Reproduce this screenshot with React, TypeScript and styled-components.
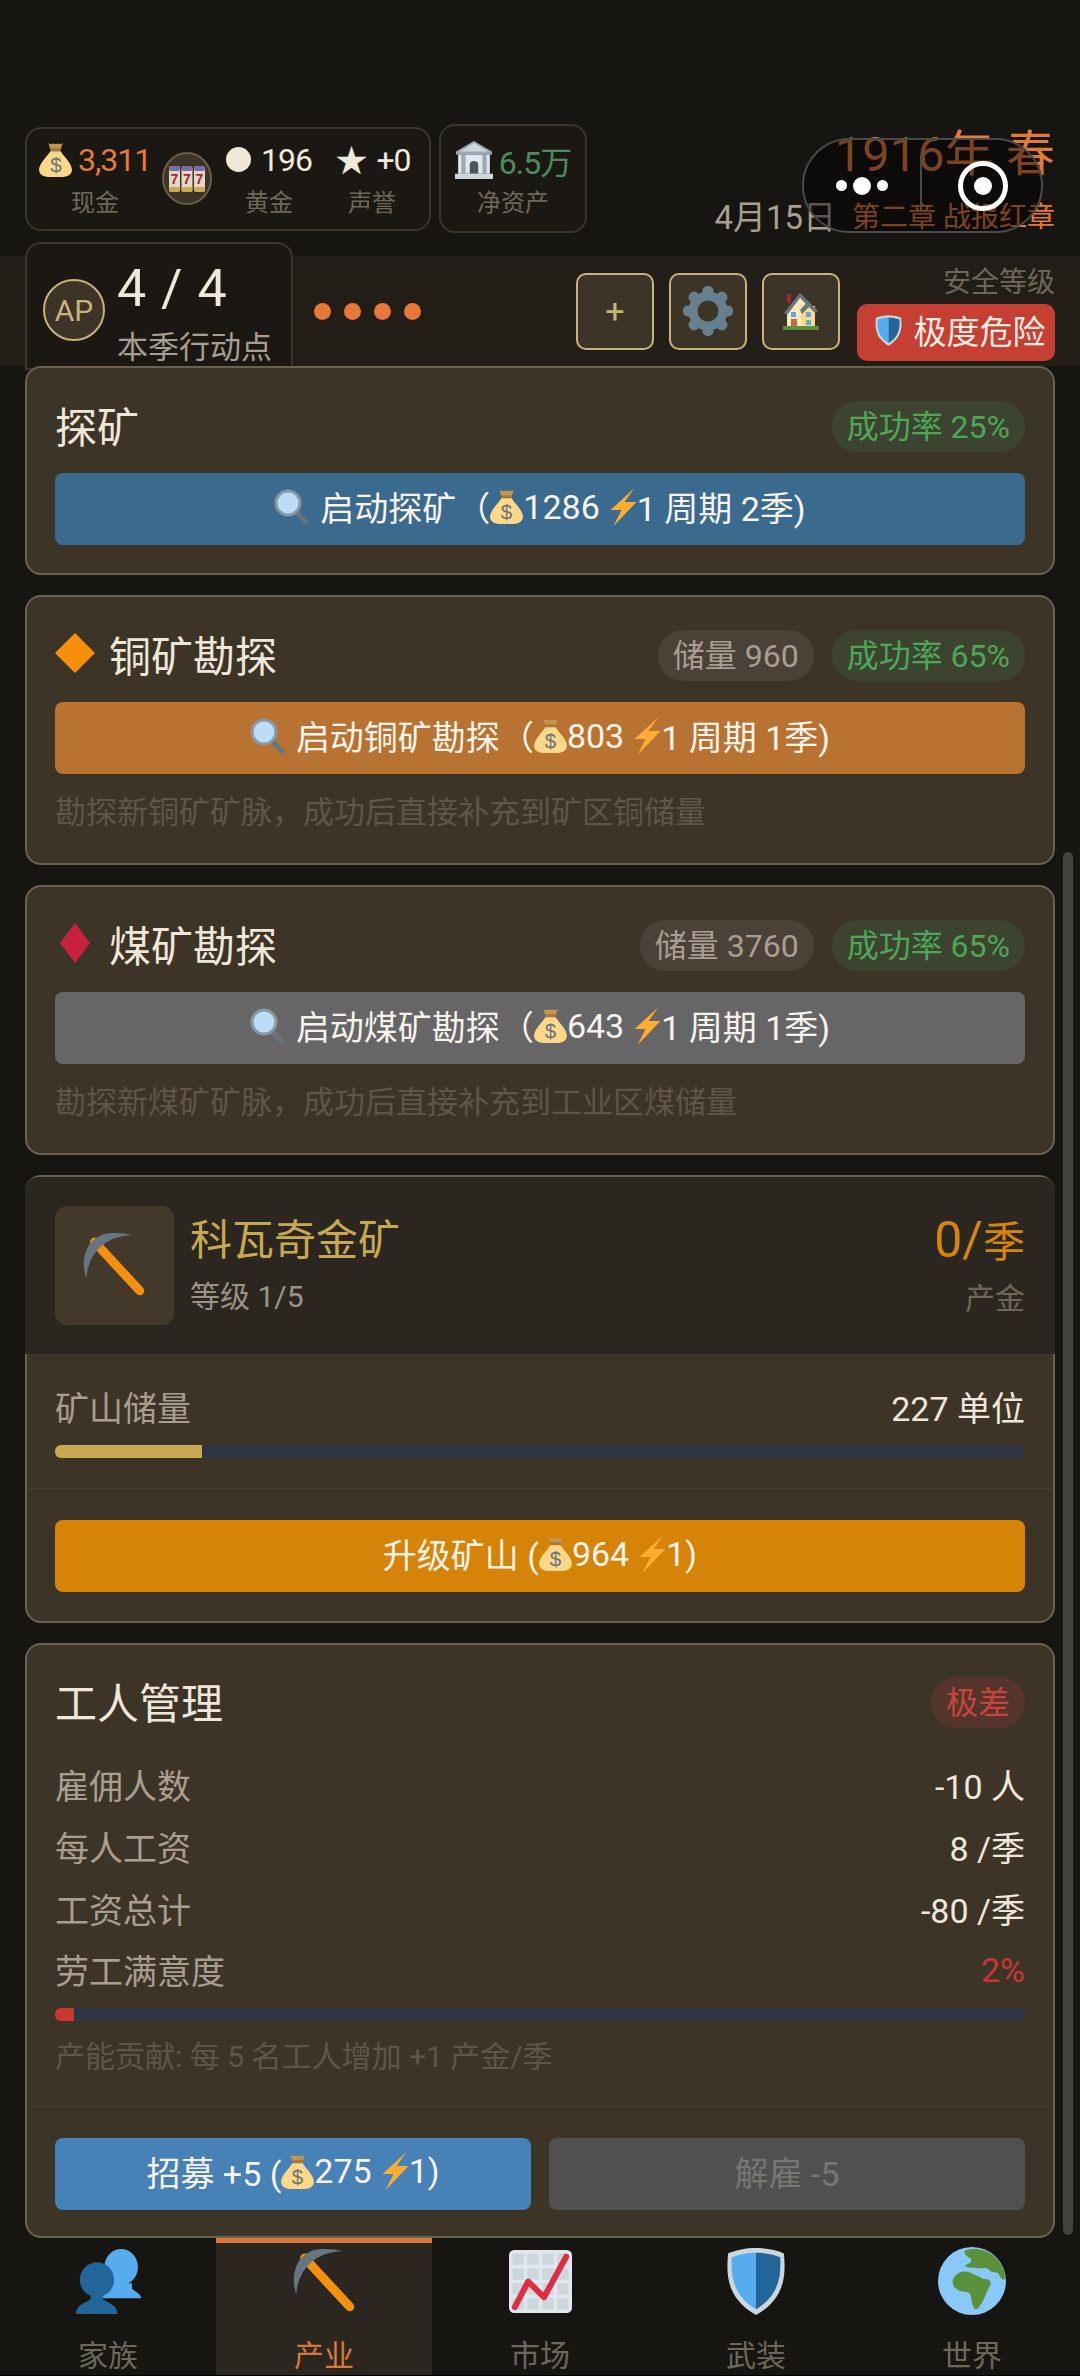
import React from 'react'
import styled, { createGlobalStyle } from 'styled-components'

const GlobalStyle = createGlobalStyle`
  html, body { margin: 0; padding: 0; background: #161512; }
  body { font-family: Roboto, "Noto Sans CJK SC", "Noto Sans", sans-serif; }
  * { box-sizing: border-box; }
`

type IconProps = { $w: number; $h?: number }
const Svg = styled.svg<IconProps>`
  width: ${p => p.$w}px;
  height: ${p => p.$h ?? p.$w}px;
  flex: none;
  display: block;
`

const Bag = ({ w = 33 }: { w?: number }) => (
  <Svg $w={w} $h={w * 1.06} viewBox="0 0 32 34">
    <path d="M9 1 C12 3 13 1 16 2 C19 1 20 3 23 1 L21 7 L11 7Z" fill="#C1964F" />
    <path d="M11 6 H21 V9 H11Z" fill="#A9763C" />
    <path d="M11 9 H21 C24 14 32 21 32 27 C32 32 27 34 23 34 H9 C5 34 0 32 0 27 C0 21 8 14 11 9Z" fill="#FDD888" />
    <text x="16" y="29" fontSize="20" fontFamily="Liberation Sans" textAnchor="middle" fill="#67757F">$</text>
  </Svg>
)

const BoltSvg = styled(Svg)`
  margin-left: 10px;
`

const Bolt = () => (
  <BoltSvg $w={27} $h={38} viewBox="0 0 26 38">
    <path d="M24 0 L0 22 H11 L3 38 L26 14 H14Z" fill="#FFAC33" />
  </BoltSvg>
)

const LensSvg = styled(Svg)`
  margin-right: 10px;
`

const Lens = () => (
  <LensSvg $w={36} viewBox="0 0 36 36">
    <path d="M21 22 L32 33" stroke="#66757F" strokeWidth="5" strokeLinecap="round" />
    <circle cx="14" cy="14" r="12" fill="#BBDDF5" stroke="#8899A6" strokeWidth="3" />
  </LensSvg>
)

const Bank = () => (
  <Svg $w={38} viewBox="0 0 36 36">
    <path d="M18 0 L35 10 V13 H1 V10Z" fill="#99AAB5" />
    <path d="M18 2 L31 10 H5Z" fill="#CCD6DD" />
    <rect x="3" y="13" width="30" height="18" fill="#E1E8ED" />
    <rect x="6" y="13" width="4" height="18" fill="#99AAB5" />
    <rect x="26" y="13" width="4" height="18" fill="#99AAB5" />
    <path d="M14 31 V22 C14 18 22 18 22 22 V31Z" fill="#4B545D" />
    <rect x="0" y="31" width="36" height="5" fill="#CCD6DD" />
  </Svg>
)

const Slot = () => (
  <Svg $w={36} $h={26} viewBox="0 0 36 26">
    {[0, 12.5, 25].map(x => (
      <g key={x}>
        <rect x={x} y="0" width="11" height="26" rx="3" fill="#E1D8C6" />
        <rect x={x} y="0" width="11" height="5" rx="2" fill="#7D6BA8" />
        <rect x={x} y="21" width="11" height="5" rx="2" fill="#C9A84F" />
        <text x={x + 5.5} y="18" fontSize="14" fontWeight="700" fontFamily="Liberation Sans" textAnchor="middle" fill="#A0283C">7</text>
      </g>
    ))}
  </Svg>
)

const Gear = () => (
  <Svg $w={50} viewBox="0 0 50 50">
    {[0, 45, 90, 135, 180, 225, 270, 315].map(a => (
      <rect key={a} x="19.5" y="0" width="11" height="14" rx="5" fill="#66808F" transform={`rotate(${a} 25 25)`} />
    ))}
    <circle cx="25" cy="25" r="15" fill="none" stroke="#66808F" strokeWidth="9" />
  </Svg>
)

const House = () => (
  <Svg $w={36} $h={38} viewBox="0 0 36 38">
    <path d="M4 20 L17 4 L32 18 V35 H4Z" fill="#FFE8B6" />
    <rect x="18" y="14" width="14" height="21" fill="#FFD983" />
    <path d="M1 21 L17 1 L35 19 L32 21 L17 6 L4 23Z" fill="#66757F" />
    <path d="M17 18 L25 9 L28 13 L19 22Z" fill="#66757F" />
    <rect x="4" y="2" width="4" height="9" fill="#A0283C" />
    <rect x="8" y="20" width="5" height="5" fill="#55ACEE" />
    <rect x="23" y="20" width="5" height="5" fill="#55ACEE" />
    <rect x="8" y="27" width="6" height="8" fill="#C1694F" />
    <rect x="23" y="28" width="5" height="5" fill="#55ACEE" />
    <rect x="0" y="34" width="36" height="4" fill="#5C913B" />
  </Svg>
)

const Shield = ({ w, h }: { w: number; h: number }) => (
  <Svg $w={w} $h={h} viewBox="0 0 32 36">
    <path d="M16 0 C21 0 27 1 31 3 C32 14 32 27 16 36 C0 27 0 14 1 3 C5 1 11 0 16 0Z" fill="#CCD6DD" />
    <path d="M16 2.5 V33 C3 25 2.5 14 3 5 C7 3.5 11 2.5 16 2.5Z" fill="#55ACEE" />
    <path d="M16 2.5 V33 C29 25 29.5 14 29 5 C25 3.5 21 2.5 16 2.5Z" fill="#226699" />
  </Svg>
)

const Pick = ({ w }: { w: number }) => (
  <Svg $w={w} viewBox="0 0 36 36">
    <path d="M7 5 L32 32" stroke="#F4900C" strokeWidth="5" strokeLinecap="round" />
    <path d="M2.4 25.3 C-1.5 14 3 2 14 .3 C18 -.2 24 0 27.7 1.3 C20 1.5 14 4 9.5 8.5 C5 13 2.8 19 2.4 25.3Z" fill="#66757F" />
  </Svg>
)

const Busts = () => (
  <Svg $w={65} viewBox="0 0 36 36">
    <path d="M13 27.3 L17 24 V19 H31 V22 C33 24 36 24.5 36 27.3Z" fill="#55ACEE" />
    <ellipse cx="25" cy="10" rx="9.3" ry="10" fill="#55ACEE" />
    <path d="M0 36 C0 31 5 30 8 28 V24 H15 V28 C18 30 23 31 23 36Z" fill="#226699" />
    <ellipse cx="11.6" cy="17" rx="9.5" ry="9.6" fill="#226699" />
  </Svg>
)

const Chart = () => (
  <Svg $w={63} viewBox="0 0 36 36">
    <rect width="36" height="36" rx="3" fill="#E1E8ED" />
    {[2, 10.5, 19, 27.5].flatMap(x =>
      [2, 10.5, 19, 27.5].map(y => <rect key={`${x}-${y}`} x={x} y={y} width="6.5" height="6.5" fill="#CCD6DD" />)
    )}
    <path d="M3.3 32.6 L11 18 L20 27 L32.7 3.8" fill="none" stroke="#DD2E44" strokeWidth="3.4" strokeLinecap="round" strokeLinejoin="round" />
  </Svg>
)

const Globe = () => (
  <Svg $w={68} viewBox="0 0 36 36">
    <circle cx="18" cy="18" r="18" fill="#88C9F9" />
    <path d="M8 17 C10 13 14 12 18 14 C20 15 23 16 24 17 C27 17 28 18 28 19 C27 22 26 23 25 26 C24 28 22 33 20 33 C18 33 18 27 17 25 C16 23 13 24 11 23 C9 22 7 20 8 17Z" fill="#5C913B" />
    <path d="M14 2 C18 0 26 1 30 5 C34 9 36 14 35.5 17 C34 18 33 16 32 14 C31 13 29 14 27 12 C25 10 22 12 20 11 C18 11 16 11 14 10 C16 9 19 8 17 6 C15 5 14 4 14 2Z" fill="#5C913B" />
  </Svg>
)

const Page = styled.div`
  position: relative;
  width: 1080px;
  height: 2376px;
  overflow: hidden;
  display: flex;
  flex-direction: column;
  background: #161512;
`

const TopRow = styled.header`
  height: 233px;
  padding: 124px 25px 0;
  display: flex;
  align-items: center;
  gap: 8px;
`

const StatBox = styled.div`
  height: 104px;
  width: 406px;
  padding: 0 21px 0 15px;
  border: 2px solid #39352d;
  border-radius: 16px;
  background: #1b1814;
  display: flex;
  align-items: center;
`

const NetBox = styled(StatBox)`
  width: 148px;
  height: 109px;
  padding: 0 10px;
  justify-content: center;
`

const Stat = styled.div<{ $w: number; $ml?: number }>`
  width: ${p => p.$w}px;
  margin-left: ${p => p.$ml ?? 0}px;
  display: flex;
  flex-direction: column;
  align-items: center;
  gap: 8px;
`

const StatValue = styled.div<{ $color?: string }>`
  display: flex;
  align-items: center;
  gap: 6px;
  height: 40px;
  font-size: 32px;
  letter-spacing: -1px;
  white-space: nowrap;
  color: ${p => p.$color ?? '#f0e9da'};
`

const StatLabel = styled.div`
  font-size: 24px;
  line-height: 30px;
  color: #6f675a;
`

const GoldDot = styled.span`
  width: 25px;
  height: 25px;
  margin-right: 4px;
  border-radius: 50%;
  background: #f0e8d5;
`

const StarMark = styled.span`
  margin: -4px 4px 0 2px;
  font-size: 32px;
`

const SlotBadge = styled.div`
  width: 53px;
  height: 53px;
  margin-left: 14px;
  border-radius: 50%;
  border: 2px solid #6b5f48;
  background: #3d3428;
  display: flex;
  align-items: center;
  justify-content: center;
`

const DateBlock = styled.div`
  flex: 1;
  margin-top: 6px;
  display: flex;
  flex-direction: column;
  align-items: flex-end;
`

const YearText = styled.div`
  font-size: 49px;
  line-height: 60px;
  color: #e07b39;
  white-space: nowrap;
`

const DateRow = styled.div`
  display: flex;
  align-items: center;
  gap: 16px;
  height: 48px;
  margin-top: 6px;
  white-space: nowrap;
`

const DayText = styled.span`
  font-size: 33px;
  color: #a89f90;
`

const ChapterText = styled.span`
  font-size: 28px;
  color: #e07b39;
`

const Capsule = styled.div`
  position: absolute;
  left: 802px;
  top: 138px;
  width: 241px;
  height: 95px;
  border: 2px solid #4a4a48;
  border-radius: 48px;
  background: rgba(0, 0, 0, 0.45);
  display: flex;
  z-index: 5;
`

const CapsuleHalf = styled.div<{ $shift?: number }>`
  flex: 1;
  display: flex;
  align-items: center;
  justify-content: center;
  gap: 6px;
  padding-left: ${p => p.$shift ?? 0}px;
`

const CapsuleLine = styled.div`
  width: 2px;
  height: 55px;
  margin-top: 15px;
  background: #4a4a48;
`

const CapsuleDot = styled.span<{ $big?: boolean }>`
  width: ${p => (p.$big ? 18 : 11)}px;
  height: ${p => (p.$big ? 18 : 11)}px;
  border-radius: 50%;
  background: #fff;
`

const CapsuleRing = styled.span`
  width: 50px;
  height: 50px;
  border: 5px solid #fff;
  border-radius: 50%;
  display: flex;
  align-items: center;
  justify-content: center;
`

const ActionBand = styled.section`
  height: 110px;
  margin-top: 23px;
  padding: 0 25px;
  background: #221d16;
  display: flex;
  align-items: center;
`

const ApBox = styled.div`
  align-self: flex-start;
  width: 268px;
  height: 128px;
  margin-top: -14px;
  flex: none;
  padding: 8px 0 0 16px;
  border: 2px solid #39352d;
  border-radius: 16px 16px 0 0;
  background: #1b1814;
  display: flex;
  align-items: center;
  gap: 12px;
`

const ApCircle = styled.div`
  width: 62px;
  height: 62px;
  border: 2px solid #c9b37a;
  border-radius: 50%;
  background: #3d3428;
  color: #c9b37a;
  font-size: 30px;
  display: flex;
  align-items: center;
  justify-content: center;
`

const ApText = styled.div`
  margin-top: 8px;
  display: flex;
  flex-direction: column;
`

const ApCount = styled.div`
  font-size: 52px;
  line-height: 62px;
  letter-spacing: 1px;
  color: #f0e9da;
  white-space: pre;
`

const ApLabel = styled.div`
  margin-top: 6px;
  font-size: 31px;
  line-height: 44px;
  color: #a89f90;
  white-space: nowrap;
`

const Pips = styled.div`
  display: flex;
  gap: 13px;
  margin-left: 21px;
`

const Pip = styled.span`
  width: 17px;
  height: 17px;
  border-radius: 50%;
  background: #e8773a;
`

const ToolGroup = styled.div`
  margin-left: auto;
  display: flex;
  gap: 15px;
`

const ToolButton = styled.button<{ $w?: number }>`
  width: ${p => p.$w ?? 78}px;
  height: 77px;
  padding: 0;
  border: 2px solid #c9b37a;
  border-radius: 10px;
  background: #3d3428;
  color: #c9b37a;
  font-family: inherit;
  font-size: 34px;
  display: flex;
  align-items: center;
  justify-content: center;
`

const SafetyCol = styled.div`
  width: 198px;
  margin-left: 17px;
  display: flex;
  flex-direction: column;
  align-items: flex-end;
`

const SafetyLabel = styled.div`
  font-size: 28px;
  line-height: 42px;
  color: #6f675a;
`

const DangerPill = styled.div`
  width: 198px;
  height: 57px;
  padding: 0 0 4px 8px;
  border-radius: 10px;
  background: #c53f32;
  color: #f7ece4;
  font-size: 33px;
  white-space: nowrap;
  display: flex;
  align-items: center;
  justify-content: center;
  gap: 12px;
`

const CardList = styled.main`
  position: relative;
  flex: 1;
  min-height: 0;
  padding: 0 25px;
  display: flex;
  flex-direction: column;
  gap: 20px;
`

const Card = styled.article<{ $h?: number }>`
  flex: none;
  ${p => (p.$h ? `height: ${p.$h}px;` : '')}
  border: 2px solid #6b6151;
  border-radius: 16px;
  background: #3d3428;
  overflow: hidden;
`

const PaddedCard = styled(Card)`
  padding: 33px 28px 0;
`

const MineCard = styled(Card)`
  overflow: visible;
`

const CardHead = styled.div`
  height: 51px;
  display: flex;
  align-items: center;
  gap: 18px;
`

const CardTitle = styled.h3`
  flex: 1;
  margin: -5px 0 0;
  display: flex;
  align-items: center;
  gap: 14px;
  font-size: 42px;
  font-weight: 400;
  color: #efe8da;
`

const Badge = styled.span<{ $tone: 'green' | 'grey' | 'red' }>`
  height: 51px;
  padding: 0 15px 5px;
  border-radius: 25px;
  font-size: 32px;
  white-space: nowrap;
  display: flex;
  align-items: center;
  background: ${p => ({ green: '#3c4430', grey: '#4a4238', red: '#55352b' })[p.$tone]};
  color: ${p => ({ green: '#4fa658', grey: '#a89f90', red: '#c8443c' })[p.$tone]};
`

const ActionButton = styled.button<{ $bg: string; $muted?: boolean }>`
  width: 100%;
  height: 72px;
  padding: 0 0 5px;
  border: 0;
  border-radius: 8px;
  background: ${p => p.$bg};
  color: ${p => (p.$muted ? '#777672' : '#f7f3ea')};
  font-family: inherit;
  font-size: 34px;
  white-space: pre;
  display: flex;
  align-items: center;
  justify-content: center;
`

const HeadButton = styled(ActionButton)`
  margin-top: 21px;
`

const Hint = styled.p`
  margin: 18px 0 0;
  font-size: 31px;
  line-height: 41px;
  color: #5f5648;
  white-space: nowrap;
`

const MineHeader = styled.div`
  height: 177px;
  margin: 0 -2px;
  padding: 29px 30px;
  border-radius: 14px 14px 0 0;
  background: #2b261f;
  display: flex;
  align-items: center;
`

const MineIcon = styled.div`
  width: 119px;
  height: 119px;
  border-radius: 12px;
  background: #43392b;
  display: flex;
  align-items: center;
  justify-content: center;
`

const MineInfo = styled.div<{ $right?: boolean }>`
  padding-top: 3px;
  display: flex;
  flex-direction: column;
  gap: 2px;
  margin-left: ${p => (p.$right ? 'auto' : '16px')};
  align-items: ${p => (p.$right ? 'flex-end' : 'flex-start')};
`

const MineName = styled.div<{ $color: string }>`
  font-size: 42px;
  line-height: 58px;
  white-space: nowrap;
  color: ${p => p.$color};
`

const RateNumber = styled.span`
  font-size: 50px;
`

const MineSub = styled.div<{ $dim?: boolean }>`
  font-size: 30px;
  line-height: 50px;
  color: ${p => (p.$dim ? '#6f675a' : '#9c9384')};
`

const ReserveBlock = styled.div`
  padding: 34px 28px 30px;
  border-bottom: 1px solid #4a4033;
`

const InfoRow = styled.div`
  display: flex;
  justify-content: space-between;
  align-items: center;
  height: 40px;
  padding-bottom: 4px;
`

const InfoLabel = styled.span`
  font-size: 34px;
  color: #a89f8f;
`

const InfoValue = styled.span<{ $color?: string }>`
  font-size: 34px;
  color: ${p => p.$color ?? '#efe8da'};
`

const Track = styled.div<{ $mt: number }>`
  height: 13px;
  margin-top: ${p => p.$mt}px;
  border-radius: 6px;
  background: #2f3545;
  overflow: hidden;
`

const TrackFill = styled.div<{ $color: string }>`
  height: 100%;
  background: ${p => p.$color};
`

const FootBlock = styled.div`
  padding: 31px 28px 29px;
`

const WorkerBody = styled.div`
  padding: 32px 28px 29px;
  border-bottom: 1px solid #4a4033;
`

const WorkerRows = styled.div`
  margin-top: 28px;
  display: flex;
  flex-direction: column;
`

const WorkerRow = styled(InfoRow)`
  height: 61.7px;
`

const WorkerHint = styled(Hint)`
  margin-top: 16px;
  font-size: 30px;
  line-height: 40px;
`

const ButtonPair = styled.div`
  padding: 31px 28px 26px;
  display: grid;
  grid-template-columns: 1fr 1fr;
  gap: 18px;
`

const TabBar = styled.nav`
  flex: none;
  height: 138px;
  border-bottom: 1px solid #000;
  background: #171512;
  display: grid;
  grid-template-columns: repeat(5, 216px);
`

const Tab = styled.div<{ $active?: boolean }>`
  height: 137px;
  overflow: hidden;
  padding-top: ${p => (p.$active ? 4 : 9)}px;
  border-top: ${p => (p.$active ? '5px solid #d9773c' : '0')};
  background: ${p => (p.$active ? '#2b261f' : 'transparent')};
  color: ${p => (p.$active ? '#d9773c' : '#6f675a')};
  display: flex;
  flex-direction: column;
  align-items: center;
`

const TabIcon = styled.div`
  height: 68px;
  flex: none;
  display: flex;
  align-items: center;
`

const TabLabel = styled.div`
  margin-top: 21px;
  font-size: 30px;
  line-height: 40px;
  flex: none;
`

const ScrollThumb = styled.div`
  position: absolute;
  right: 7px;
  top: 852px;
  width: 10px;
  height: 1383px;
  border-radius: 5px;
  background: #44423f;
  z-index: 4;
`

const Money = ({ amount }: { amount: number }) => (
  <>
    <Bag />
    {amount}
    <Bolt />
  </>
)

const surveys = [
  {
    title: '铜矿勘探',
    reserve: 960,
    name: '启动铜矿勘探',
    cost: 803,
    bg: '#b87333',
    hint: '勘探新铜矿矿脉，成功后直接补充到矿区铜储量',
    mark: <Svg $w={40} viewBox="0 0 40 40"><path d="M20 0 L40 20 L20 40 L0 20Z" fill="#F4900C" /></Svg>,
  },
  {
    title: '煤矿勘探',
    reserve: 3760,
    name: '启动煤矿勘探',
    cost: 643,
    bg: '#666666',
    hint: '勘探新煤矿矿脉，成功后直接补充到工业区煤储量',
    mark: <Svg $w={40} viewBox="0 0 40 40"><path d="M20 0 L35 20 L20 40 L5 20Z" fill="#C8213F" /></Svg>,
  },
]

const workerRows = [
  { label: '雇佣人数', value: '-10 人' },
  { label: '每人工资', value: '8 /季' },
  { label: '工资总计', value: '-80 /季' },
  { label: '劳工满意度', value: '2%', color: '#c8382f' },
]

const tabs = [
  { label: '家族', icon: <Busts /> },
  { label: '产业', icon: <Pick w={65} />, active: true },
  { label: '市场', icon: <Chart /> },
  { label: '武装', icon: <Shield w={60} h={67} /> },
  { label: '世界', icon: <Globe /> },
]

export default function App() {
  return (
    <Page>
      <GlobalStyle />
      <TopRow>
        <StatBox>
          <Stat $w={106}>
            <StatValue $color="#e07b39"><Bag />3,311</StatValue>
            <StatLabel>现金</StatLabel>
          </Stat>
          <SlotBadge><Slot /></SlotBadge>
          <Stat $w={84} $ml={15}>
            <StatValue><GoldDot />196</StatValue>
            <StatLabel>黄金</StatLabel>
          </Stat>
          <Stat $w={72} $ml={25}>
            <StatValue><StarMark>★</StarMark>+0</StatValue>
            <StatLabel>声誉</StatLabel>
          </Stat>
        </StatBox>
        <NetBox>
          <Stat $w={128}>
            <StatValue $color="#4d8a62"><Bank />6.5万</StatValue>
            <StatLabel>净资产</StatLabel>
          </Stat>
        </NetBox>
        <DateBlock>
          <YearText>1916年 春</YearText>
          <DateRow>
            <DayText>4月15日</DayText>
            <ChapterText>第二章 战报红章</ChapterText>
          </DateRow>
        </DateBlock>
      </TopRow>

      <ActionBand>
        <ApBox>
          <ApCircle>AP</ApCircle>
          <ApText>
            <ApCount>4 / 4</ApCount>
            <ApLabel>本季行动点</ApLabel>
          </ApText>
        </ApBox>
        <Pips>
          <Pip /><Pip /><Pip /><Pip />
        </Pips>
        <ToolGroup>
          <ToolButton>+</ToolButton>
          <ToolButton><Gear /></ToolButton>
          <ToolButton><House /></ToolButton>
        </ToolGroup>
        <SafetyCol>
          <SafetyLabel>安全等级</SafetyLabel>
          <DangerPill><Shield w={27} h={31} />极度危险</DangerPill>
        </SafetyCol>
      </ActionBand>

      <CardList>
        <PaddedCard $h={209}>
          <CardHead>
            <CardTitle>探矿</CardTitle>
            <Badge $tone="green">成功率 25%</Badge>
          </CardHead>
          <HeadButton $bg="#3b6a8f"><Lens />启动探矿（<Money amount={1286} />1 周期 2季)</HeadButton>
        </PaddedCard>

        {surveys.map(s => (
          <PaddedCard key={s.title} $h={270}>
            <CardHead>
              <CardTitle>{s.mark}{s.title}</CardTitle>
              <Badge $tone="grey">储量 {s.reserve}</Badge>
              <Badge $tone="green">成功率 65%</Badge>
            </CardHead>
            <HeadButton $bg={s.bg}><Lens />{s.name}（<Money amount={s.cost} />1 周期 1季)</HeadButton>
            <Hint>{s.hint}</Hint>
          </PaddedCard>
        ))}

        <MineCard $h={448}>
          <MineHeader>
            <MineIcon><Pick w={65} /></MineIcon>
            <MineInfo>
              <MineName $color="#c8a94f">科瓦奇金矿</MineName>
              <MineSub>等级 1/5</MineSub>
            </MineInfo>
            <MineInfo $right>
              <MineName $color="#d4860b"><RateNumber>0/</RateNumber>季</MineName>
              <MineSub $dim>产金</MineSub>
            </MineInfo>
          </MineHeader>
          <ReserveBlock>
            <InfoRow>
              <InfoLabel>矿山储量</InfoLabel>
              <InfoValue>227 单位</InfoValue>
            </InfoRow>
            <Track $mt={17}>
              <TrackFill $color="#c8a94f" style={{ width: '15.2%' }} />
            </Track>
          </ReserveBlock>
          <FootBlock>
            <ActionButton $bg="#d68408">升级矿山 (<Money amount={964} />1)</ActionButton>
          </FootBlock>
        </MineCard>

        <Card $h={595}>
          <WorkerBody>
            <CardHead>
              <CardTitle>工人管理</CardTitle>
              <Badge $tone="red">极差</Badge>
            </CardHead>
            <WorkerRows>
              {workerRows.map(r => (
                <WorkerRow key={r.label}>
                  <InfoLabel>{r.label}</InfoLabel>
                  <InfoValue $color={r.color}>{r.value}</InfoValue>
                </WorkerRow>
              ))}
            </WorkerRows>
            <Track $mt={5}>
              <TrackFill $color="#c8382f" style={{ width: '2%' }} />
            </Track>
            <WorkerHint>产能贡献: 每 5 名工人增加 +1 产金/季</WorkerHint>
          </WorkerBody>
          <ButtonPair>
            <ActionButton $bg="#4682b6">招募 +5 (<Money amount={275} />1)</ActionButton>
            <ActionButton $bg="#505050" $muted>解雇 -5</ActionButton>
          </ButtonPair>
        </Card>
      </CardList>

      <TabBar>
        {tabs.map(t => (
          <Tab key={t.label} $active={t.active}>
            <TabIcon>{t.icon}</TabIcon>
            <TabLabel>{t.label}</TabLabel>
          </Tab>
        ))}
      </TabBar>

      <Capsule>
        <CapsuleHalf>
          <CapsuleDot /><CapsuleDot $big /><CapsuleDot />
        </CapsuleHalf>
        <CapsuleLine />
        <CapsuleHalf $shift={4}>
          <CapsuleRing><CapsuleDot $big /></CapsuleRing>
        </CapsuleHalf>
      </Capsule>
      <ScrollThumb />
    </Page>
  )
}
